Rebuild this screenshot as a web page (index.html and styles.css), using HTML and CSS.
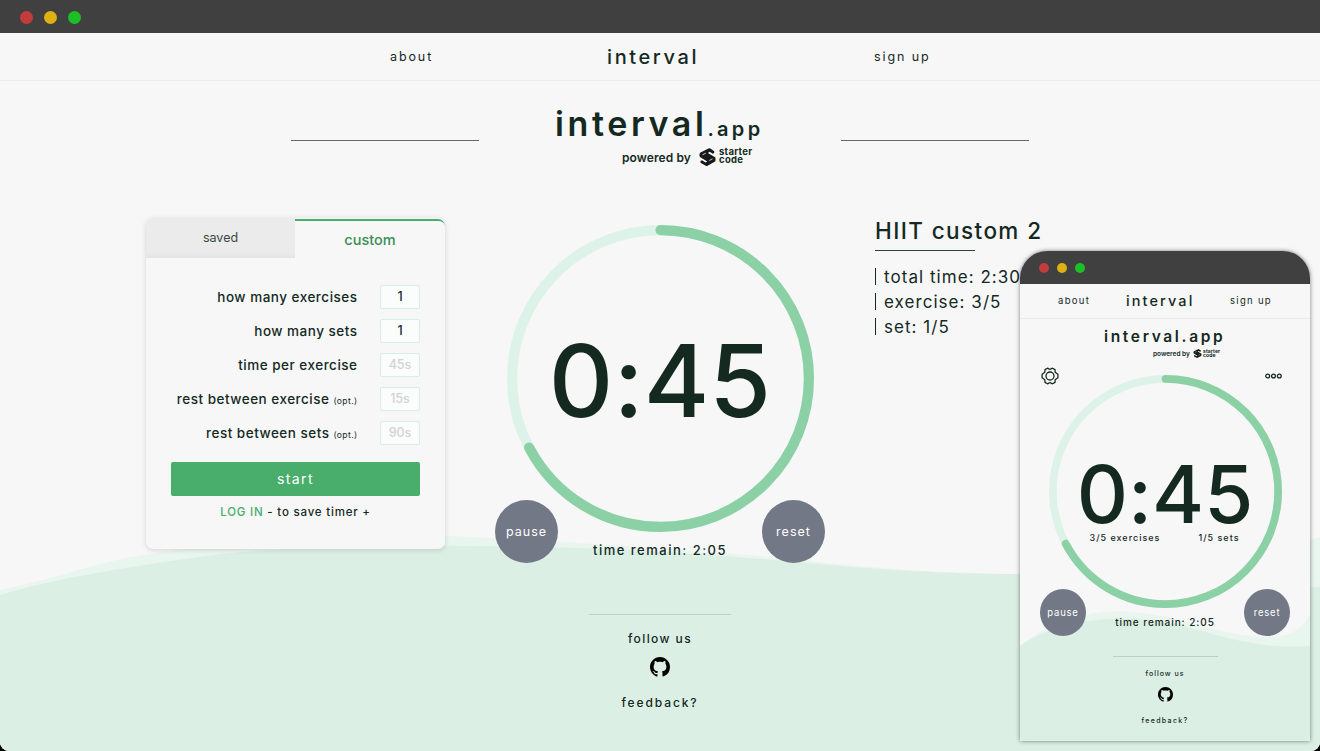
FILE: index.html
```html
<!DOCTYPE html>
<html lang="en">
<head>
<meta charset="utf-8">
<title>interval.app</title>
<link rel="stylesheet" href="styles.css">
</head>
<body>
<svg width="0" height="0" class="defs">
  <symbol id="github" viewBox="0 0 16 16"><path d="M8 0C3.58 0 0 3.58 0 8c0 3.54 2.29 6.53 5.47 7.59.4.07.55-.17.55-.38 0-.19-.01-.82-.01-1.49-2.01.37-2.53-.49-2.69-.94-.09-.23-.48-.94-.82-1.13-.28-.15-.68-.52-.01-.53.63-.01 1.08.58 1.23.82.72 1.21 1.87.87 2.33.66.07-.52.28-.87.51-1.07-1.78-.2-3.64-.89-3.64-3.95 0-.87.31-1.59.82-2.15-.08-.2-.36-1.02.08-2.12 0 0 .67-.21 2.2.82.64-.18 1.32-.27 2-.27s1.36.09 2 .27c1.53-1.04 2.2-.82 2.2-.82.44 1.1.16 1.92.08 2.12.51.56.82 1.27.82 2.15 0 3.07-1.87 3.75-3.65 3.95.29.25.54.73.54 1.48 0 1.07-.01 1.93-.01 2.2 0 .21.15.46.55.38A8.01 8.01 0 0 0 16 8c0-4.42-3.58-8-8-8z"/></symbol>
  <symbol id="mark" viewBox="0 0 16 18"><path d="M9 .4 1 4.500Q0 5 0 6.200v1.500q0 .9.800 1.500l7 4.300-1.800 1-3.500-2.300-1.500.8v1.800l5.300 2.900q.9.500 1.800 0l7-3.900q.900-.5.900-1.600v-1.700q0-.9-.8-1.400L8.300 4.900l2-1.100 2.900 1.900 1.500-.8V3.200L10.800.4Q9.900-.1 9 .4Z"/><path class="mark-gap" d="M3 6.800 6.300 5.200M9.800 12.500 13 10.900"/></symbol>
</svg>
<div class="window">
  <svg class="waves" viewBox="0 0 1320 231" width="1320" height="231">
    <path class="wave-light" d="M0 70C65 57 90 43 150 34C250 16 350 12 445 16C560 20 690 31 760 36C850 45 910 53 1015 54C1120 55 1240 42 1320 17V231H0Z"/>
    <path class="wave-dark" d="M0 75C70 54 165 42 220 34C320 24 430 25 540 27C650 29 740 37 830 45C910 52 970 54 1015 54C1080 63 1200 68 1320 67V231H0Z"/>
  </svg>
  <header class="bar"><i class="dot red"></i><i class="dot yellow"></i><i class="dot green"></i></header>
  <nav class="nav"><a class="about">about</a><a class="brand">interval</a><a class="signup">sign up</a></nav>
  <section class="hero">
    <hr class="rule">
    <div class="logo">
      <h1 class="title">interval<small class="suffix">.app</small></h1>
      <div class="powered"><span class="by">powered by</span><svg class="mark"><use href="#mark"/></svg><span class="starter">starter<br>code</span></div>
    </div>
    <hr class="rule">
  </section>
  <main class="main">
    <section class="card">
      <div class="tabs"><div class="tab saved">saved</div><div class="tab custom">custom</div></div>
      <div class="form">
        <div class="row"><span>how many exercises</span><b class="field">1</b></div>
        <div class="row"><span>how many sets</span><b class="field">1</b></div>
        <div class="row"><span>time per exercise</span><b class="field hint">45s</b></div>
        <div class="row"><span>rest between exercise</span><em class="opt">(opt.)</em><b class="field hint">15s</b></div>
        <div class="row"><span>rest between sets</span><em class="opt">(opt.)</em><b class="field hint">90s</b></div>
        <div class="start">start</div>
        <p class="login"><span class="green-text">LOG IN</span> - to save timer +</p>
      </div>
    </section>
    <section class="timer">
      <div class="ring">
        <svg class="ring-svg" viewBox="0 0 307 307"><circle class="track" cx="153.500" cy="153.500" r="148.400"/><circle class="progress" cx="153.500" cy="153.500" r="148.400" pathLength="100" transform="rotate(-90 153.500 153.500)"/></svg>
        <div class="digits">0:45</div>
      </div>
      <div class="controls"><span class="round">pause</span><span class="remain">time remain: 2:05</span><span class="round">reset</span></div>
    </section>
    <section class="info">
      <h2 class="info-title">HIIT custom 2</h2>
      <ul class="stats"><li class="stat">total time: 2:30</li><li class="stat">exercise: 3/5</li><li class="stat">set: 1/5</li></ul>
    </section>
  </main>
  <footer class="footer">
    <div class="follow">follow us</div>
    <svg class="github"><use href="#github"/></svg>
    <div class="feedback">feedback?</div>
  </footer>

  <aside class="phone">
    <svg class="phone-waves" viewBox="0 0 290 140" width="290" height="140">
      <path class="wave-light" d="M0 45C30 20 75 7 115 11C160 15 210 38 252 36C275 35 283 25 290 14V140H0Z"/>
      <path class="wave-dark" d="M0 45C35 20 95 12 145 21C195 31 230 49 290 45V140H0Z"/>
    </svg>
    <header class="bar"><i class="dot red"></i><i class="dot yellow"></i><i class="dot green"></i></header>
    <nav class="nav"><a class="about">about</a><a class="brand">interval</a><a class="signup">sign up</a></nav>
    <div class="logo">
      <h1 class="title">interval.app</h1>
      <div class="powered"><span class="by">powered by</span><svg class="mark"><use href="#mark"/></svg><span class="starter">starter<br>code</span></div>
    </div>
    <div class="tools">
      <svg class="gear" viewBox="0 0 18 18"><path d="M6.500 1.200 9 2.500 11.500 1.200 14 2.600 14.200 5.300 16.900 7.300V10.700L14.200 12.700 14 15.400 11.500 16.800 9 15.500 6.500 16.800 4 15.400 3.800 12.700 1.100 10.700V7.300L3.800 5.300 4 2.600Z"/><circle cx="9" cy="9" r="4"/></svg>
      <svg class="more" viewBox="0 0 17 6"><circle cx="2.700" cy="3" r="1.900"/><circle cx="8.500" cy="3" r="1.900"/><circle cx="14.300" cy="3" r="1.900"/></svg>
    </div>
    <div class="ring">
      <svg class="ring-svg" viewBox="0 0 307 307"><circle class="track" cx="153.500" cy="153.500" r="148.400"/><circle class="progress" cx="153.500" cy="153.500" r="148.400" pathLength="100" transform="rotate(-90 153.500 153.500)"/></svg>
      <div class="digits">0:45</div>
      <div class="counts"><span>3/5 exercises</span><span>1/5 sets</span></div>
    </div>
    <div class="controls"><span class="round">pause</span><span class="remain">time remain: 2:05</span><span class="round">reset</span></div>
    <footer class="footer">
      <div class="follow">follow us</div>
      <svg class="github"><use href="#github"/></svg>
      <div class="feedback">feedback?</div>
    </footer>
  </aside>
</div>
</body>
</html>
```

FILE: styles.css
```css
* { box-sizing: border-box; }
html { background: #000; }
body { margin: 0; font-family: Inter, Roboto, sans-serif; font-feature-settings: "calt" 0; color: #14291f; }
h1, h2, p, ul, hr { margin: 0; padding: 0; border: 0; }
ul { list-style: none; }
.defs { position: absolute; }
.window { position: relative; width: 1320px; height: 751px; overflow: hidden; background: #f7f7f7; border-radius: 0 0 9px 9px; }
.waves { position: absolute; left: 0; bottom: 0; }
.wave-light { fill: #e9f5ef; }
.wave-dark { fill: #dcefe4; }

.bar { height: 33px; background: #404040; display: flex; align-items: center; gap: 11px; padding: 2px 0 0 20px; }
.dot { width: 13px; height: 13px; border-radius: 50%; }
.red { background: #c13c3b; }
.yellow { background: #deb014; }
.green { background: #1dbf26; }

.nav { position: relative; height: 48px; border-bottom: 1px solid #ebebeb; display: grid; grid-template-columns: 217px 267px 60px; justify-content: start; align-items: center; padding-left: 390px; font-size: 12.500px; line-height: 46px; letter-spacing: 1.900px; white-space: nowrap; }
.brand { font-size: 20px; font-weight: 500; letter-spacing: 2.600px; }

.hero { position: relative; height: 137px; display: grid; grid-template-columns: 188px 210px 188px; justify-content: space-between; padding: 0 291px; }
.rule { height: 1px; margin-top: 59px; background: #5c6e66; }
.logo { white-space: nowrap; }
.title { font-size: 34px; line-height: 40px; margin-top: 23px; font-weight: 600; letter-spacing: 3.600px; }
.suffix { font-size: 20px; letter-spacing: 3.300px; }
.powered { display: flex; align-items: center; height: 20px; margin: -2px 0 0 67px; }
.by { font-size: 12px; font-weight: 600; width: 77px; letter-spacing: .1px; }
.mark { width: 17px; height: 18px; fill: #151917; }
.mark-gap { stroke: #f7f7f7; stroke-width: .8; }
.starter { font-size: 9.500px; line-height: 8px; font-weight: 700; margin: -2px 0 0 3px; letter-spacing: .3px; }

.main { position: relative; height: 345px; display: grid; grid-template-columns: 299px 330px 1fr; gap: 50px; padding-left: 146px; }
.card { height: 331px; border-radius: 7px; background: #f7f7f7; box-shadow: 0 1px 5px rgba(0,0,0,.15); overflow: hidden; }
.tabs { display: grid; grid-template: 40px / 149px 150px; text-align: center; line-height: 40px; }
.saved { background: linear-gradient(#ebebeb 85%, #e4e4e4); font-size: 12.500px; color: #3a4a42; }
.custom { margin-top: 1px; border-top: 2px solid #4aad6b; border-radius: 0 7px 0 0; font-size: 14.500px; line-height: 37px; font-weight: 500; color: #3b8d55; }
.form { padding: 27px 25px 0; }
.row { height: 24px; margin-bottom: 10px; display: flex; justify-content: flex-end; align-items: center; font-size: 13.500px; font-weight: 500; letter-spacing: .5px; white-space: nowrap; }
.field { width: 40px; height: 24px; margin-left: 22.500px; border: 1px solid #d8efe4; border-radius: 2px; background: #fbfdfd; font-size: 12.500px; line-height: 22px; font-weight: 500; letter-spacing: 0; text-align: center; }
.hint { color: #d1d4d4; }
.opt { font-size: 8.500px; font-style: normal; font-weight: 400; letter-spacing: .4px; margin: 4px 0 0 4px; }
.start { height: 34px; margin-top: 17px; border-radius: 2px; background: #49ae6b; color: #fff; font-size: 14px; letter-spacing: 1.400px; line-height: 34px; text-align: center; }
.login { font-size: 11.500px; line-height: 32px; text-align: center; font-weight: 550; letter-spacing: .8px; }
.green-text { color: #49ae6b; }

.ring { position: relative; display: grid; width: 307px; height: 307px; margin: 7px auto 0; }
.ring-svg { grid-area: 1 / 1; width: 100%; height: 100%; fill: none; stroke-width: 10.200; }
.track { stroke: #ddf3ea; }
.progress { stroke: #8bd1a5; stroke-linecap: round; stroke-dasharray: 67.300 100; }
.digits { grid-area: 1 / 1; align-self: center; justify-self: center; font-size: 100px; line-height: 76px; margin-top: 4px; font-weight: 480; white-space: nowrap; }
.controls { position: relative; height: 63px; margin-top: -32px; display: flex; justify-content: space-between; align-items: flex-end; }
.round { width: 63px; height: 63px; border-radius: 50%; background: #727885; color: #fff; font-size: 12.500px; letter-spacing: 1px; line-height: 63px; text-align: center; }
.remain { font-size: 13px; font-weight: 500; line-height: 26px; letter-spacing: 1.500px; white-space: nowrap; }

.info-title { font-size: 22.500px; font-weight: 500; line-height: 26px; letter-spacing: 1.400px; }
.info-title::after { content: ""; display: block; width: 100px; height: 1px; margin-top: 6px; background: #294438; }
.stats { margin-top: 13px; }
.stat { height: 25px; display: flex; align-items: center; font-size: 17px; letter-spacing: 1.050px; white-space: nowrap; }
.stat::before { content: ""; width: 1px; height: 17px; background: #14291f; margin-right: 8px; }

.footer { position: relative; width: 142px; margin: 51px auto 0; border-top: 1px solid #bfd1c7; display: flex; flex-direction: column; align-items: center; font-size: 12px; font-weight: 500; letter-spacing: 1.400px; }
.follow, .feedback { line-height: 20px; }
.follow { margin-top: 14px; }
.feedback { letter-spacing: 1.900px; }
.github { width: 20px; height: 20px; margin: 8px 0 16px; }

.phone { position: absolute; left: 1020px; top: 251px; width: 290px; height: 490px; border-radius: 27px 27px 0 0; background: #f7f7f7; box-shadow: 0 0 4px rgba(0,0,0,.5); overflow: hidden; }
.phone-waves { position: absolute; left: 0; bottom: 0; }
.phone .bar { gap: 8px; padding: 1px 0 0 19px; }
.phone .dot { width: 10px; height: 10px; }
.phone .nav { height: 35px; padding-left: 38px; grid-template-columns: 68px 104px 48px; font-size: 9.500px; line-height: 34px; letter-spacing: 1.300px; }
.phone .brand { font-size: 14.500px; letter-spacing: 2.100px; }
.phone .logo { position: relative; height: 47px; padding: 8px 0 0 84px; }
.phone .title { font-size: 15.500px; line-height: 20px; margin: 0; letter-spacing: 2.650px; }
.phone .powered { height: 11px; margin: 1px 0 0 49px; }
.phone .by { font-size: 6.500px; width: 40px; letter-spacing: 0; }
.phone .mark { width: 9px; height: 9px; }
.phone .starter { font-size: 5px; line-height: 4.500px; margin: -1px 0 0 1px; letter-spacing: .1px; }
.phone .tools { position: relative; height: 18px; display: flex; justify-content: space-between; align-items: center; padding: 2px 28px 0 21px; }
.gear { width: 18px; height: 18px; fill: none; stroke: #14291f; stroke-width: 1.300; stroke-linejoin: round; }
.more { width: 17px; height: 6px; fill: none; stroke: #14291f; stroke-width: 1.300; }
.phone .ring { width: 233px; height: 233px; margin: -9px auto 0; }
.phone .digits { font-size: 79.500px; line-height: 62px; margin-top: 4px; }
.phone .counts { grid-area: 1 / 1; align-self: center; display: flex; justify-content: space-between; margin: 92px 42px 0 41px; font-size: 9px; letter-spacing: 1px; font-weight: 500; white-space: nowrap; }
.phone .controls { height: 47px; margin-top: -19px; padding: 0 20px; }
.phone .round { width: 46px; height: 47px; font-size: 9.500px; line-height: 47px; letter-spacing: .8px; }
.phone .remain { font-size: 10px; letter-spacing: .95px; line-height: 27px; }
.phone .footer { width: 105px; margin-top: 20px; font-size: 7px; letter-spacing: 1px; }
.phone .follow, .phone .feedback { line-height: 12px; }
.phone .follow { margin-top: 11px; }
.phone .feedback { letter-spacing: 1.350px; }
.phone .github { width: 15px; height: 15px; margin: 7px 0 13px; }
```
